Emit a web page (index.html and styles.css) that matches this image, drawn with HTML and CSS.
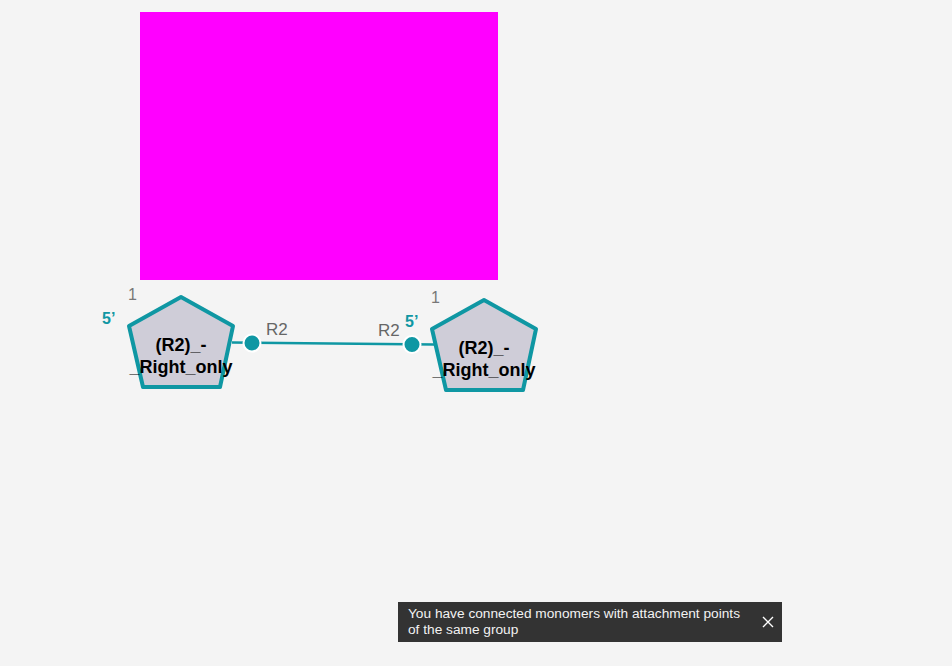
FILE: index.html
```html
<!DOCTYPE html>
<html>
<head>
<meta charset="utf-8">
<link rel="stylesheet" href="styles.css">
</head>
<body>
<div class="canvas">
  <svg class="diagram" width="952" height="666" viewBox="0 0 952 666" xmlns="http://www.w3.org/2000/svg">
    <rect x="140" y="12" width="358" height="268" fill="#ff00ff"/>
    <line x1="232" y1="342.5" x2="434" y2="344.5" class="bond"/>
    <g>
      <polygon class="mono" points="181,297 129,326 143,387 220,387 233,326"/>
      <text class="num" x="128" y="300">1</text>
      <text class="five" x="102" y="324">5’</text>
      <text class="name" x="181" y="351">(R2)_-</text>
      <text class="name" x="181" y="373">_Right_only</text>
      <circle class="ap" cx="252" cy="343" r="8.5"/>
      <text class="r2" x="266" y="335">R2</text>
    </g>
    <g transform="translate(303,3)">
      <polygon class="mono" points="181,297 129,326 143,387 220,387 233,326"/>
      <text class="num" x="128" y="300">1</text>
      <text class="five" x="102" y="324">5’</text>
      <text class="name" x="181" y="351">(R2)_-</text>
      <text class="name" x="181" y="373">_Right_only</text>
    </g>
    <circle class="ap" cx="412" cy="344.5" r="8.5"/>
    <text class="r2" x="378" y="336">R2</text>
  </svg>
  <div class="toast">
    <span class="toast-text">You have connected monomers with attachment points of the same group</span>
    <svg class="close" width="12" height="12" viewBox="0 0 12 12"><path d="M1 1L11 11M11 1L1 11" stroke="#fff" stroke-width="1.4"/></svg>
  </div>
</div>
</body>
</html>
```
FILE: styles.css
```css
html, body {
  margin: 0;
  padding: 0;
  background: #f4f4f4;
  overflow: hidden;
}
.canvas {
  position: relative;
  width: 952px;
  height: 666px;
}
.diagram {
  position: absolute;
  left: 0;
  top: 0;
}
.bond {
  stroke: #0f97a3;
  stroke-width: 2.5;
}
.mono {
  fill: #cfcdd8;
  stroke: #0f97a3;
  stroke-width: 4;
  stroke-linejoin: round;
}
.ap {
  fill: #0f97a3;
  stroke: #ffffff;
  stroke-width: 2;
}
.num {
  font-family: "Liberation Sans", Arial, sans-serif;
  font-size: 16px;
  fill: #777;
}
.five {
  font-family: "Liberation Sans", Arial, sans-serif;
  font-size: 16px;
  font-weight: bold;
  fill: #0f97a3;
}
.r2 {
  font-family: "Liberation Sans", Arial, sans-serif;
  font-size: 17px;
  fill: #666;
}
.name {
  font-family: "Liberation Sans", Arial, sans-serif;
  font-size: 18px;
  font-weight: bold;
  fill: #000;
  text-anchor: middle;
}
.toast {
  position: absolute;
  left: 398px;
  top: 602px;
  width: 384px;
  height: 40px;
  box-sizing: border-box;
  padding: 0 8px 0 10px;
  background: #333333;
  display: flex;
  align-items: center;
  gap: 10px;
}
.toast-text {
  font-family: "Liberation Sans", Arial, sans-serif;
  font-size: 13.7px;
  line-height: 16px;
  color: #f2f2f2;
  flex: 1;
}
.close {
  flex: none;
}
```
